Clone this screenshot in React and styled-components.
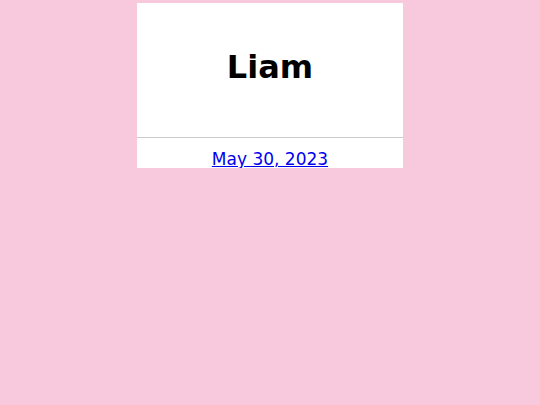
import React from "react";
import styled, { createGlobalStyle } from "styled-components";

const Global = createGlobalStyle`
  html, body {
    margin: 0;
    padding: 0;
    background: #f8c8dc;
  }
  body {
    padding-top: 3px;
    font-family: "DejaVu Sans", Verdana, sans-serif;
  }
`;

const Card = styled.div`
  width: 266px;
  height: 165px;
  margin: 0 auto;
  background: #ffffff;
  overflow: hidden;
  display: flex;
  flex-direction: column;
`;

const Header = styled.div`
  height: 134px;
  flex-shrink: 0;
  border-bottom: 1px solid #cccccc;
  display: flex;
  align-items: center;
  justify-content: center;
`;

const Name = styled.h1`
  margin: 0 0 7px;
  font-size: 32px;
  font-weight: bold;
  color: #000000;
`;

const Footer = styled.div`
  padding-top: 11px;
  text-align: center;
`;

const DateLink = styled.a`
  font-size: 17px;
  color: #0000ee;
  text-decoration: underline;
`;

export default function App() {
  return (
    <>
      <Global />
      <Card>
        <Header>
          <Name>Liam</Name>
        </Header>
        <Footer>
          <DateLink href="#">May 30, 2023</DateLink>
        </Footer>
      </Card>
    </>
  );
}
